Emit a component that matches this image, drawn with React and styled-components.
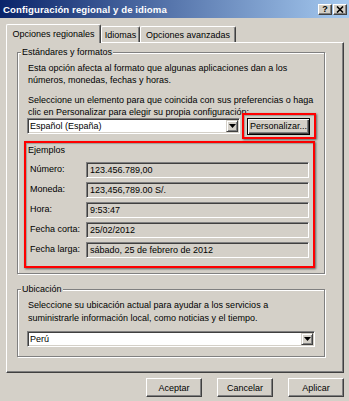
import React from 'react';
import styled, { createGlobalStyle } from 'styled-components';

const face = '#D4D0C8';

const Global = createGlobalStyle`
  html, body { margin: 0; padding: 0; background: ${face}; }
  body {
    width: 349px; height: 401px; overflow: hidden;
    font-family: "Liberation Sans", Arial, sans-serif;
    font-size: 9px; color: #000;
  }
  * { box-sizing: border-box; }
`;

const Window = styled.div`
  width: 349px; height: 401px;
  display: flex; flex-direction: column;
  background: ${face};
`;

const TitleBar = styled.div`
  height: 18px; flex: none;
  display: flex; align-items: center; justify-content: space-between;
  padding: 0 2px 0 3px;
  background: linear-gradient(to right, #0A246A, #A6CAF0);
`;

const TitleText = styled.span`
  color: #fff; font-weight: bold; font-size: 9.6px; letter-spacing: 0.1px;
`;

const TitleButtons = styled.div`
  display: flex; gap: 1px; align-items: center;
`;

const TitleButton = styled.div`
  width: 14px; height: 11px;
  display: flex; align-items: center; justify-content: center;
  background: ${face};
  border: 1px solid; border-color: #fff #404040 #404040 #fff;
  box-shadow: inset -1px -1px #808080;
  font-weight: bold; font-size: 9px; line-height: 9px;
`;

const Body = styled.div`
  flex: 1; display: flex; flex-direction: column;
  padding: 6px 5px 0 6px;
`;

const TabStrip = styled.div`
  display: flex; align-items: flex-end;
  height: 19px; margin-bottom: -1px;
  position: relative; z-index: 1;
`;

const Tab = styled.div`
  width: ${p => p.$w}px;
  height: ${p => (p.$active ? 19 : 16)}px;
  margin-bottom: ${p => (p.$active ? 0 : 1)}px;
  display: flex; align-items: center; justify-content: center;
  padding-bottom: ${p => (p.$active ? 1 : 0)}px;
  background: ${face};
  border-top: 1px solid #fff; border-left: 1px solid #fff;
  border-right: 1px solid #404040;
  box-shadow: inset -1px 0 #808080;
  border-radius: 2px 2px 0 0;
  white-space: nowrap;
`;

const Panel = styled.div`
  height: 331px;
  border: 1px solid; border-color: #fff #404040 #404040 #fff;
  box-shadow: inset -1px -1px #808080;
  padding: 3px 18px 0 10px;
  display: flex; flex-direction: column;
`;

const Group = styled.fieldset`
  margin: ${p => p.$mt || 0}px 0 0 0;
  padding: 4px 8px ${p => p.$pb}px 7px;
  border: 1px solid #808080;
  box-shadow: inset 1px 1px #fff, 1px 1px #fff;
  min-width: 0;
`;

const Legend = styled.legend`
  padding: 0 1px; margin-left: -4px;
  line-height: 12px; background: ${face};
`;

const Para = styled.p`
  margin: ${p => p.$mt || 0}px 0 0 3px;
  line-height: ${p => p.$lh || 12}px;
`;

const ComboRow = styled.div`
  display: flex; align-items: center; gap: 7px;
  margin-left: 2px; height: 16px;
`;

const Combo = styled.div`
  width: ${p => p.$w}px; height: 16px; flex: none;
  display: flex; align-items: center;
  background: #fff;
  border: 1px solid; border-color: #808080 #fff #fff #808080;
  box-shadow: inset 1px 1px #404040, inset -1px -1px ${face};
  padding: 1px;
`;

const ComboText = styled.span`
  flex: 1; padding-left: 1px; line-height: 12px; white-space: nowrap;
`;

const DropButton = styled.div`
  width: 12px; height: 12px; flex: none;
  display: flex; align-items: center; justify-content: center;
  background: ${face};
  border: 1px solid; border-color: ${face} #404040 #404040 ${face};
  box-shadow: inset 1px 1px #fff, inset -1px -1px #808080;
`;

const ActionButton = styled.div`
  position: relative;
  width: 63px; height: 17px; flex: none;
  display: flex; align-items: center; justify-content: center;
  background: ${face};
  border: 1px solid #000;
  box-shadow: inset 1px 1px #fff, inset -1px -1px #404040, inset -2px -2px #808080;
  &::after {
    content: '';
    position: absolute;
    top: -6px; left: -6px; right: -7px; bottom: -5px;
    border: 2px solid #f00;
    box-shadow: 1px 1px 2px rgba(0,0,0,0.55), inset 1px 1px 1px rgba(0,0,0,0.25);
  }
`;

const Examples = styled.div`
  width: 291px; margin: 7px 0 0 -1px;
  border: 2px solid #f00;
  box-shadow: 1px 1px 2px rgba(0,0,0,0.55), inset 1px 1px 1px rgba(0,0,0,0.25);
  padding: 1px 4px 8px 4px;
`;

const ExamplesTitle = styled.div`
  line-height: 12px; margin-left: -2px;
`;

const ExampleGrid = styled.div`
  display: grid; grid-template-columns: 56px 1fr;
  row-gap: 4px; margin-top: 6px; align-items: center;
`;

const Label = styled.span`
  line-height: 12px; padding-bottom: 2px; white-space: nowrap;
`;

const Field = styled.div`
  height: 16px;
  display: flex; align-items: center;
  background: ${face};
  border: 1px solid; border-color: #808080 #fff #fff #808080;
  box-shadow: inset 1px 1px #404040;
  padding-left: 3px; white-space: nowrap;
`;

const ButtonRow = styled.div`
  display: flex; justify-content: flex-end; gap: 15px;
  margin-top: 5px;
`;

const Button = styled.div`
  width: 56px; height: 19px;
  display: flex; align-items: center; justify-content: center;
  background: ${face};
  border: 1px solid; border-color: #fff #404040 #404040 #fff;
  box-shadow: inset -1px -1px #808080;
`;

const Arrow = () => (
  <svg width="7" height="4" viewBox="0 0 7 4">
    <polygon points="0,0 7,0 3.5,4" fill="#000" />
  </svg>
);

const CloseGlyph = () => (
  <svg width="8" height="7" viewBox="0 0 8 7">
    <path d="M1 0.5 L7 6.5 M7 0.5 L1 6.5" stroke="#000" strokeWidth="1.6" />
  </svg>
);

const examples = [
  ['Número:', '123.456.789,00'],
  ['Moneda:', '123,456,789.00 S/.'],
  ['Hora:', '9:53:47'],
  ['Fecha corta:', '25/02/2012'],
  ['Fecha larga:', 'sábado, 25 de febrero de 2012'],
];

export default function App() {
  return (
    <Window>
      <Global />
      <TitleBar>
        <TitleText>Configuración regional y de idioma</TitleText>
        <TitleButtons>
          <TitleButton>?</TitleButton>
          <TitleButton><CloseGlyph /></TitleButton>
        </TitleButtons>
      </TitleBar>
      <Body>
        <TabStrip>
          <Tab $active $w={95}>Opciones regionales</Tab>
          <Tab $w={39}>Idiomas</Tab>
          <Tab $w={96}>Opciones avanzadas</Tab>
        </TabStrip>
        <Panel>
          <Group $pb={5}>
            <Legend>Estándares y formatos</Legend>
            <Para>Esta opción afecta al formato que algunas aplicaciones dan a los números, monedas, fechas y horas.</Para>
            <Para $mt={8}>Seleccione un elemento para que coincida con sus preferencias o haga clic en Personalizar para elegir su propia configuración:</Para>
            <ComboRow>
              <Combo $w={213}>
                <ComboText>Español (España)</ComboText>
                <DropButton><Arrow /></DropButton>
              </Combo>
              <ActionButton>Personalizar...</ActionButton>
            </ComboRow>
            <Examples>
              <ExamplesTitle>Ejemplos</ExamplesTitle>
              <ExampleGrid>
                {examples.map(([l, v]) => (
                  <React.Fragment key={l}>
                    <Label>{l}</Label>
                    <Field>{v}</Field>
                  </React.Fragment>
                ))}
              </ExampleGrid>
            </Examples>
          </Group>
          <Group $mt={9} $pb={9}>
            <Legend>Ubicación</Legend>
            <Para $lh={13}>Seleccione su ubicación actual para ayudar a los servicios a suministrarle información local, como noticias y el tiempo.</Para>
            <ComboRow style={{ marginTop: 6 }}>
              <Combo $w={288}>
                <ComboText>Perú</ComboText>
                <DropButton><Arrow /></DropButton>
              </Combo>
            </ComboRow>
          </Group>
        </Panel>
        <ButtonRow>
          <Button>Aceptar</Button>
          <Button>Cancelar</Button>
          <Button>Aplicar</Button>
        </ButtonRow>
      </Body>
    </Window>
  );
}
